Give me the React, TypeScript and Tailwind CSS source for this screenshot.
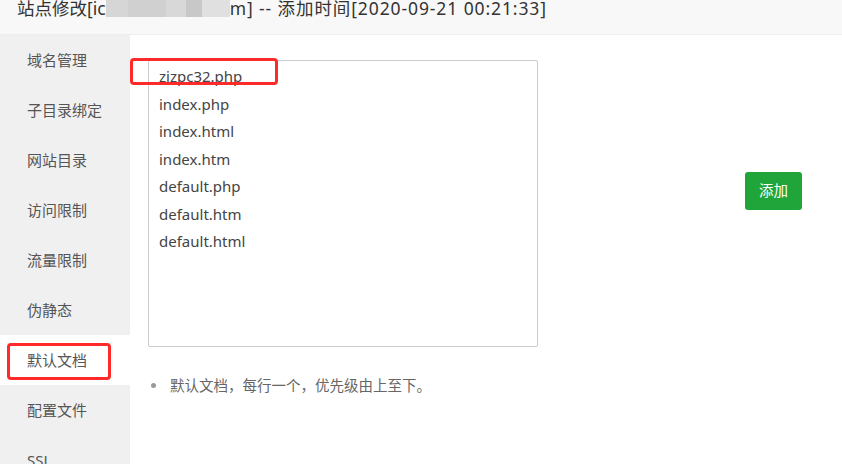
import React from "react";

const menu = [
  "域名管理",
  "子目录绑定",
  "网站目录",
  "访问限制",
  "流量限制",
  "伪静态",
  "默认文档",
  "配置文件",
  "SSL",
];

const files = [
  "zizpc32.php",
  "index.php",
  "index.html",
  "index.htm",
  "default.php",
  "default.htm",
  "default.html",
].join("\n");

export default function App() {
  const font = { fontFamily: '"Noto Sans", "Noto Sans CJK SC", sans-serif' };

  return (
    <div
      className="relative h-[464px] w-[842px] overflow-hidden bg-white text-[#333]"
      style={font}
    >
      {/* title bar, scrolled so its top is cut */}
      <div className="flex h-[35px] flex-col border-b border-[#eee] bg-[#f8f8f8] pl-[17px]">
        <div className="-mt-[4px] flex items-center whitespace-nowrap text-[17.5px] leading-[24px] text-[#333]">
          <span>站点修改[ic</span>
          <span className="inline-flex h-[18px] w-[124px]">
            <span className="h-full w-[22px] bg-[#d6d6d6]" />
            <span className="h-full w-[38px] bg-[#d0d0d0]" />
            <span className="h-full w-[20px] bg-[#d8d8d8]" />
            <span className="h-full w-[16px] bg-[#c8c8c8]" />
            <span className="h-full w-[28px] bg-[#e0e0e0]" />
          </span>
          <span className="tracking-[0.9px]">m] -- 添加时间[2020-09-21 00:21:33]</span>
        </div>
      </div>

      <div className="flex h-[429px]">
        {/* sidebar */}
        <div className="w-[130px] shrink-0 bg-[#f0f0f0]">
          {menu.map((m) => (
            <div
              key={m}
              className={
                "flex h-[50px] items-center pl-[27px] text-[15px] text-[#555] " +
                (m === "默认文档" ? "bg-white" : "")
              }
            >
              {m}
            </div>
          ))}
        </div>

        {/* content */}
        <div className="flex-1 pl-[18px] pt-[25px]">
          <div className="flex">
            <textarea
              readOnly
              value={files}
              className="h-[287px] w-[390px] resize-none rounded-[2px] border border-[#ccc] pl-[10px] pt-[2px] text-[15px] leading-[27.5px] text-[#444] outline-none"
              style={font}
            />
            <button className="ml-auto mr-[40px] mt-[112px] h-[38px] w-[57px] rounded-[3px] bg-[#20a53a] text-[14.5px] text-white">
              添加
            </button>
          </div>
          <div className="mt-[28px] flex items-center text-[14.5px] leading-[20px] text-[#666]">
            <span className="ml-[3px] mr-[14px] h-[5px] w-[5px] rounded-full bg-[#999]" />
            <span>默认文档，每行一个，优先级由上至下。</span>
          </div>
        </div>
      </div>

      {/* red annotation boxes */}
      <div className="absolute left-[130px] top-[58px] h-[27px] w-[148px] rounded-[4px] border-[3px] border-[#ff2a2a]" />
      <div className="absolute left-[7px] top-[343px] h-[37px] w-[104px] rounded-[4px] border-[3px] border-[#ff2a2a]" />
    </div>
  );
}
